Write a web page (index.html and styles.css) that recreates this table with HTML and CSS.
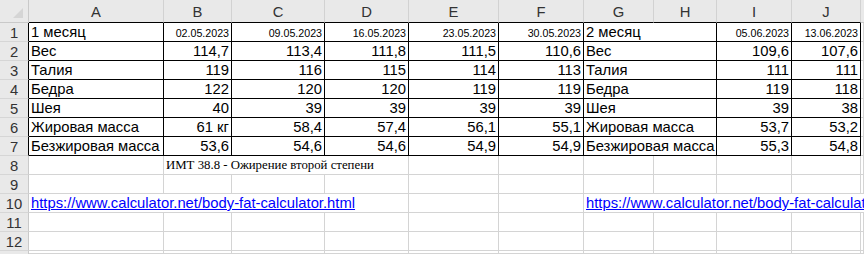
FILE: index.html
```html
<!DOCTYPE html>
<html lang="ru">
<head>
<meta charset="utf-8">
<title>Sheet</title>
<link rel="stylesheet" href="styles.css">
</head>
<body>
<div class="sheet">
  <div class="corner"><svg width="10" height="10" viewBox="0 0 10 10"><polygon points="10,0 10,10 0,10" fill="#d5d5d5"/></svg></div>
  <div class="ch b">A</div><div class="ch b">B</div><div class="ch b">C</div><div class="ch b">D</div><div class="ch b">E</div><div class="ch b">F</div><div class="ch b">G</div><div class="ch b">H</div><div class="ch b">I</div><div class="ch b">J</div><div class="ch last"></div>

  <div class="rh b">1</div>
  <div class="c b txt">1 месяц</div>
  <div class="c b num dt">02.05.2023</div><div class="c b num dt">09.05.2023</div><div class="c b num dt">16.05.2023</div><div class="c b num dt">23.05.2023</div><div class="c b num dt">30.05.2023</div>
  <div class="c b txt span2">2 месяц</div>
  <div class="c b num dt">05.06.2023</div><div class="c b num dt">13.06.2023</div><div class="c"></div>

  <div class="rh b">2</div>
  <div class="c b txt">Вес</div>
  <div class="c b num">114,7</div><div class="c b num">113,4</div><div class="c b num">111,8</div><div class="c b num">111,5</div><div class="c b num">110,6</div>
  <div class="c b txt span2">Вес</div>
  <div class="c b num">109,6</div><div class="c b num">107,6</div><div class="c"></div>

  <div class="rh b">3</div>
  <div class="c b txt">Талия</div>
  <div class="c b num">119</div><div class="c b num">116</div><div class="c b num">115</div><div class="c b num">114</div><div class="c b num">113</div>
  <div class="c b txt span2">Талия</div>
  <div class="c b num">111</div><div class="c b num">111</div><div class="c"></div>

  <div class="rh b">4</div>
  <div class="c b txt">Бедра</div>
  <div class="c b num">122</div><div class="c b num">120</div><div class="c b num">120</div><div class="c b num">119</div><div class="c b num">119</div>
  <div class="c b txt span2">Бедра</div>
  <div class="c b num">119</div><div class="c b num">118</div><div class="c"></div>

  <div class="rh b">5</div>
  <div class="c b txt">Шея</div>
  <div class="c b num">40</div><div class="c b num">39</div><div class="c b num">39</div><div class="c b num">39</div><div class="c b num">39</div>
  <div class="c b txt span2">Шея</div>
  <div class="c b num">39</div><div class="c b num">38</div><div class="c"></div>

  <div class="rh b">6</div>
  <div class="c b txt">Жировая масса</div>
  <div class="c b num">61 кг</div><div class="c b num">58,4</div><div class="c b num">57,4</div><div class="c b num">56,1</div><div class="c b num">55,1</div>
  <div class="c b txt span2">Жировая масса</div>
  <div class="c b num">53,7</div><div class="c b num">53,2</div><div class="c"></div>

  <div class="rh b">7</div>
  <div class="c b txt">Безжировая масса</div>
  <div class="c b num">53,6</div><div class="c b num">54,6</div><div class="c b num">54,6</div><div class="c b num">54,9</div><div class="c b num">54,9</div>
  <div class="c b txt span2">Безжировая масса</div>
  <div class="c b num">55,3</div><div class="c b num">54,8</div><div class="c"></div>

  <div class="rh">8</div>
  <div class="c"></div>
  <div class="c note span3">ИМТ 38.8 - Ожирение второй степени</div>
  <div class="c"></div><div class="c"></div><div class="c"></div><div class="c"></div><div class="c"></div><div class="c"></div><div class="c"></div>

  <div class="rh">9</div>
  <div class="c"></div><div class="c"></div><div class="c"></div><div class="c"></div><div class="c"></div><div class="c"></div><div class="c"></div><div class="c"></div><div class="c"></div><div class="c"></div><div class="c"></div>

  <div class="rh">10</div>
  <div class="c txt span4"><a class="link" href="#">https://www.calculator.net/body-fat-calculator.html</a></div>
  <div class="c"></div><div class="c"></div>
  <div class="c txt span5"><a class="link" href="#">https://www.calculator.net/body-fat-calculator.html</a></div>

  <div class="rh">11</div>
  <div class="c"></div><div class="c"></div><div class="c"></div><div class="c"></div><div class="c"></div><div class="c"></div><div class="c"></div><div class="c"></div><div class="c"></div><div class="c"></div><div class="c"></div>

  <div class="rh">12</div>
  <div class="c"></div><div class="c"></div><div class="c"></div><div class="c"></div><div class="c"></div><div class="c"></div><div class="c"></div><div class="c"></div><div class="c"></div><div class="c"></div><div class="c"></div>

  <div class="rh tail"></div>
  <div class="c"></div><div class="c"></div><div class="c"></div><div class="c"></div><div class="c"></div><div class="c"></div><div class="c"></div><div class="c"></div><div class="c"></div><div class="c"></div><div class="c"></div>
</div>
</body>
</html>
```
FILE: styles.css
```css
html, body {
  margin: 0;
  padding: 0;
  background: #ffffff;
}
body {
  width: 864px;
  height: 254px;
  overflow: hidden;
  font-family: "Liberation Sans", Arial, sans-serif;
}
.sheet {
  display: grid;
  grid-template-columns: 29px 135px 68px 93px 84px 90px 85px 70px 63px 75px 69px 1fr;
  grid-template-rows: 23px repeat(12, 19px) 3px;
  width: 864px;
  height: 254px;
  overflow: hidden;
}
.corner {
  background: #e9e9e9;
  border-right: 1px solid #c9c9c9;
  border-bottom: 1px solid #c9c9c9;
  display: flex;
  align-items: flex-end;
  justify-content: flex-end;
  padding: 0 5px 4px 0;
}
.corner svg { display: block; }
.ch {
  background: #e9e9e9;
  border-right: 1px solid #d2d2d2;
  border-bottom: 1px solid #c9c9c9;
  display: flex;
  align-items: center;
  justify-content: center;
  font-size: 14.8px;
  color: #333333;
  padding-top: 1px;
}
.ch.b { border-bottom-color: #000000; }
.ch.last { border-right: none; }
.rh {
  background: #e9e9e9;
  border-right: 1px solid #c9c9c9;
  border-bottom: 1px solid #d6d6d6;
  display: flex;
  align-items: center;
  justify-content: center;
  font-size: 14.8px;
  color: #333333;
  line-height: 18px;
  padding-top: 1px;
  overflow: hidden;
}
.rh.b { border-right-color: #000000; }
.rh.tail { padding-top: 0; border-bottom: none; }
.c {
  border-right: 1px solid #d4d4d4;
  border-bottom: 1px solid #d4d4d4;
  font-size: 14.8px;
  line-height: 18px;
  color: #000000;
  white-space: nowrap;
  overflow: hidden;
  min-width: 0;
}
.c.b {
  border-right-color: #000000;
  border-bottom-color: #000000;
}
.txt { padding-left: 2px; text-align: left; }
.num { padding-right: 2px; text-align: right; }
.dt { font-size: 10.67px; padding-top: 1px; }
.span2 { grid-column: span 2; }
.span3 { grid-column: span 3; }
.span4 { grid-column: span 4; }
.span5 { grid-column: span 5; border-right: none; }
.note {
  font-family: "Liberation Serif", "Times New Roman", serif;
  font-size: 12.8px;
  padding-left: 2px;
  line-height: 18px;
}
.link {
  color: #0000ff;
  text-decoration: underline;
}
```
